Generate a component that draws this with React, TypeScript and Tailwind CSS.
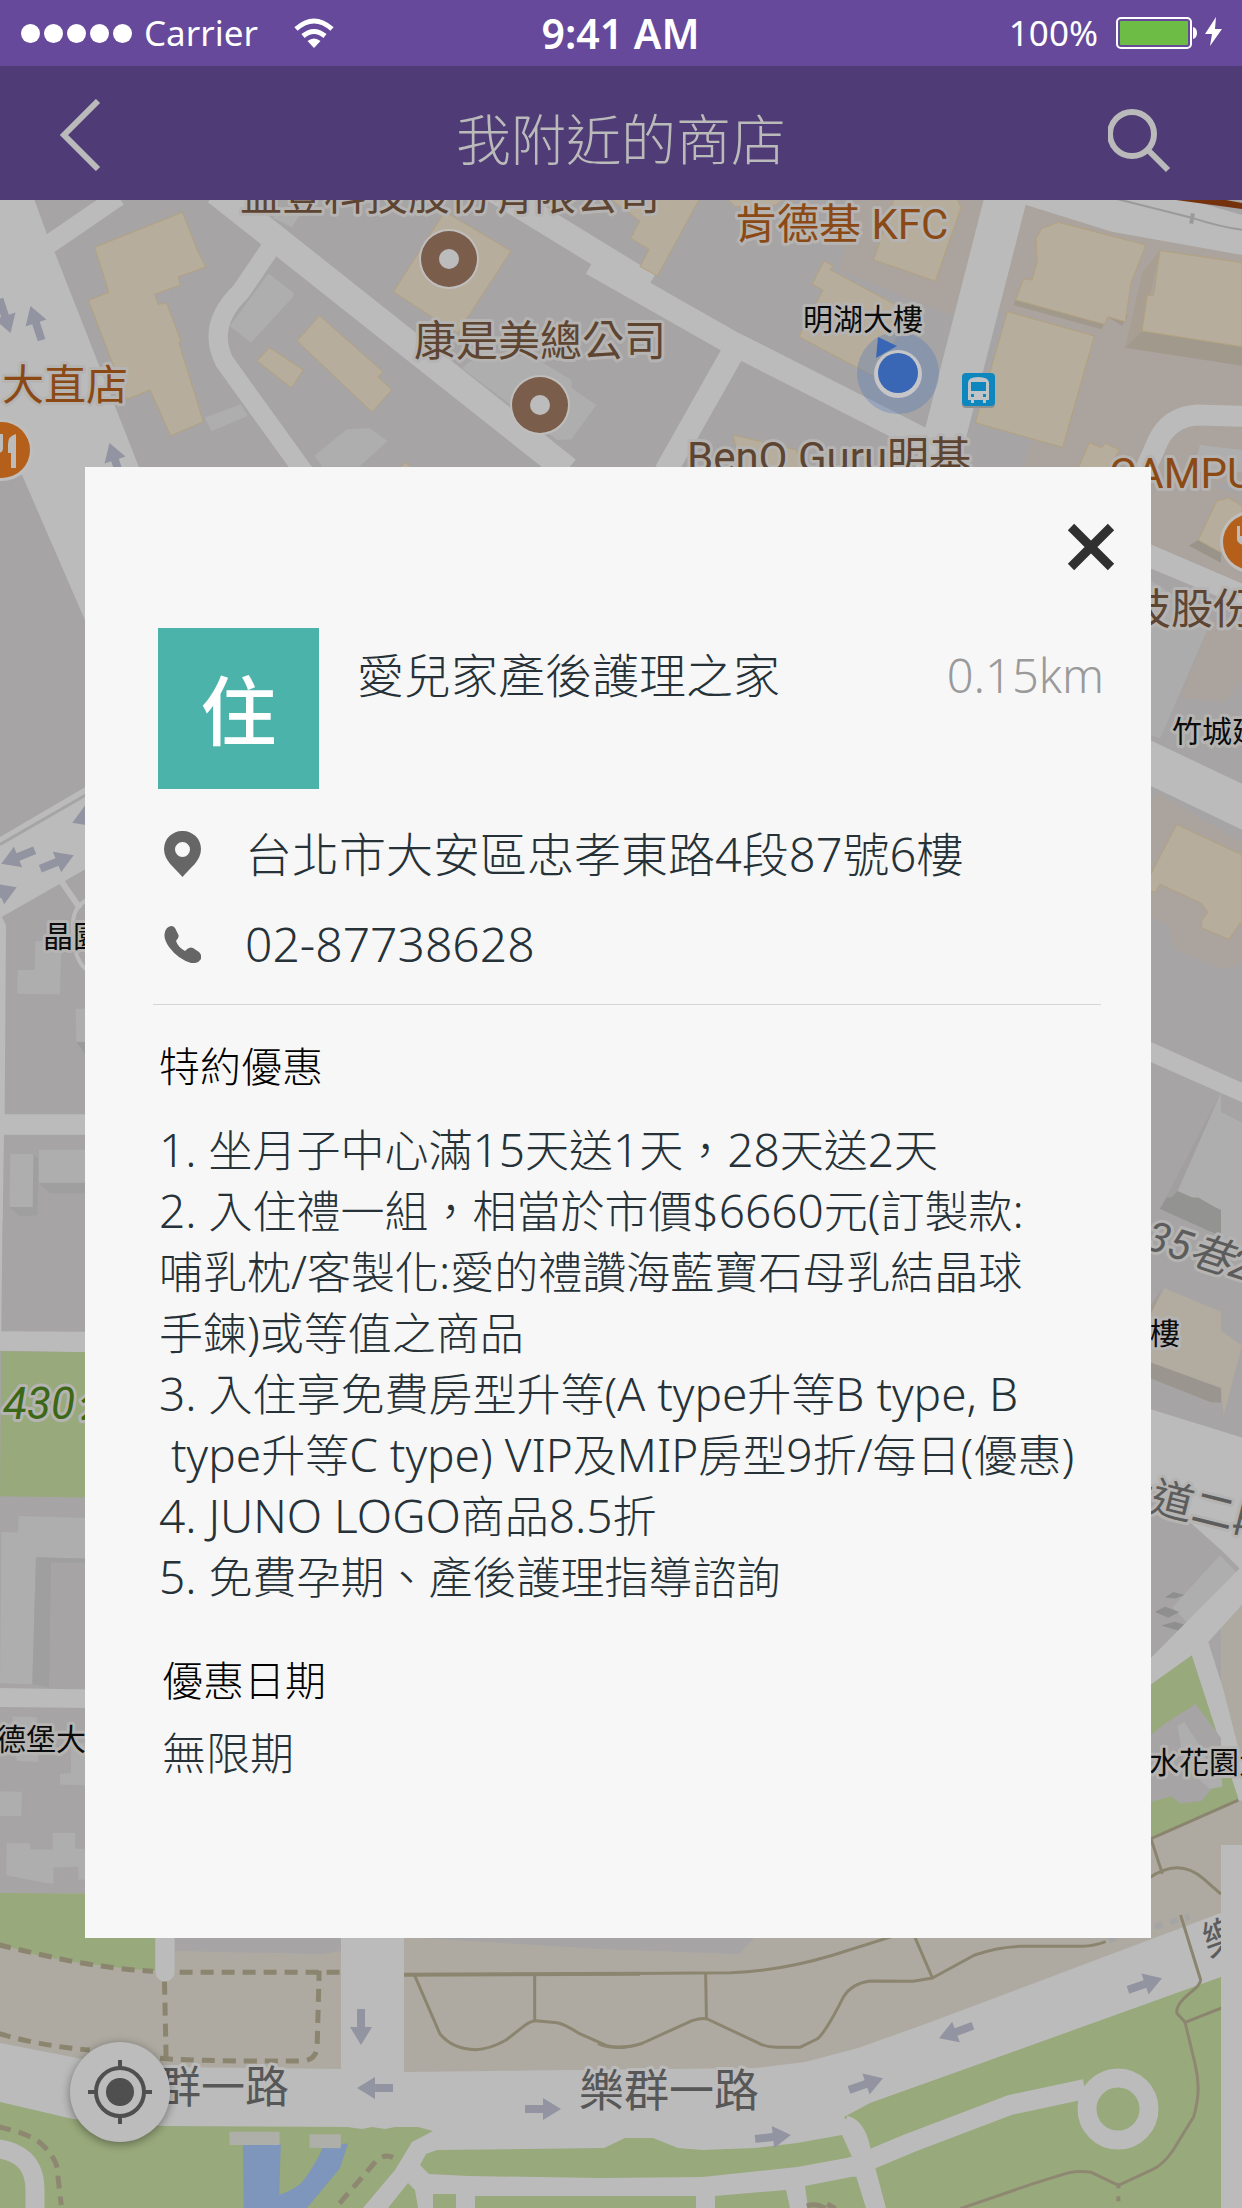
import React from "react";

const ROAD = "#bbbbbb";
const TAN = "#b6ad9c";
const TAN_EDGE = "#b3a27f";
const LIGHT = "#aeaeae";
const SHADE = "#9b9b9a";
const PINK = "#aba39d";
const GREEN = "#98a97b";
const BEIGE = "#aeaaa2";
const TRAIL = "#8b856f";

type Points = { p: string };

const Tan = ({ p }: Points) => (
  <polygon points={p} fill={TAN} stroke={TAN_EDGE} strokeWidth="1" vectorEffect="non-scaling-stroke" />
);
const Light = ({ p }: Points) => <polygon points={p} fill={LIGHT} />;
const Fill = ({ p, c }: Points & { c: string }) => <polygon points={p} fill={c} />;
const Way = ({ d, w, c = ROAD, dash, cap }: { d: string; w: number; c?: string; dash?: string; cap?: "round" | "butt" }) => (
  <path
    d={d}
    fill="none"
    stroke={c}
    strokeWidth={w}
    strokeDasharray={dash}
    strokeLinecap={cap}
    strokeLinejoin="round"
    vectorEffect="non-scaling-stroke"
  />
);
const Arrow = ({ x, y, a }: { x: number; y: number; a: number }) => (
  <path d="M-18,0 L0,-11 V-4 H18 V4 H0 V11 Z" fill="#9294a1" transform={`translate(${x} ${y}) rotate(${a})`} />
);
const Label = ({ x, y, s, c, a = 0, halo = "#b5b4b2", italic, children }: {
  x: number; y: number; s: number; c: string; a?: number; halo?: string; italic?: boolean; children: string;
}) => (
  <text
    transform={`translate(${x} ${y}) rotate(${a})`}
    fontSize={s}
    fill={c}
    stroke={halo}
    strokeWidth="6"
    strokeLinejoin="round"
    paintOrder="stroke"
    fontStyle={italic ? "italic" : undefined}
    className="font-['Roboto','Noto_Sans_CJK_TC',sans-serif] font-normal whitespace-pre"
  >
    {children}
  </text>
);
const Ring = ({ x, y }: { x: number; y: number }) => (
  <g>
    <circle cx={x} cy={y} r="30" fill="#c0bebc" />
    <circle cx={x} cy={y} r="28" fill="#7a5d4a" />
    <circle cx={x} cy={y} r="10" fill="#bcbcbc" />
  </g>
);
const Food = ({ x, y }: { x: number; y: number }) => (
  <g transform={`translate(${x} ${y})`}>
    <circle r="31" fill="#c0bebc" />
    <circle r="28" fill="#b5601a" />
    <path d="M-14,-16 h3 v10 h3 v-10 h3 v10 h3 v-10 h3 v14 q0,4 -4,5 v15 h-5 v-15 q-6,-2 -6,-6 Z" fill="#bcbcbc" />
    <path d="M14,-16 q-8,2 -8,10 v9 h3 v15 h5 Z" fill="#bcbcbc" />
  </g>
);

function CityMap() {
  return (
    <svg
      className="absolute inset-0 h-full w-full bg-[#a6a4a5]"
      viewBox="0 200 1242 2008"
      preserveAspectRatio="xMidYMin slice"
      role="img"
      aria-label="地圖"
    >
      {/* north-west blocks */}
      <g transform="translate(0 195) scale(.40816 .33333)">
        <Fill c={ROAD} p="0,0 80,0 115,118 135,175 340,815 500,1275 208,1275 54,840 0,825" />
        <Way d="M115,152 L290,5" w={19} />
        <Way d="M530,-10 L1390,825" w={27} />
        <Way d="M662,160 L590,290 Q505,390 550,500 L750,840" w={19} />
        <Way d="M1190,-30 L1590,270" w={25} />
        <Tan p="447,52 232,157 267,292 217,316 282,525 310,613 368,585 418,722 498,680 438,443 443,438 408,325 387,328 379,298 442,270 437,245 504,216 484,168" />
        <Tan p="783,362 728,438 911,650 960,585 926,546 938,530" />
        <Tan p="660,458 630,498 714,578 743,525" />
        <Tan p="1090,50 1252,168 1120,415 964,290" />
        <Tan p="993,802 970,830 1020,830" />
        <Light p="658,235 720,295 718,305 615,443 563,393" />
        <Light p="590,628 607,663 518,709 501,668" />
        <Light p="850,703 905,699 950,738 880,815 790,815 770,782" />
        <Light p="1150,500 1300,480 1400,555 1400,578 1461,630 1400,733 1365,735 1132,520" />
        <Light p="670,60 735,60 715,97 670,70" />
      </g>
      {/* north-east blocks */}
      <g transform="translate(600 195) scale(.40944 .33333)">
        <Fill c={PINK} p="620,0 950,0 860,362 585,225" />
        <Fill c={PINK} p="1040,20 1568,180 1568,870 1030,830 1100,560 965,320" />
        <Tan p="50,0 248,0 140,243 98,215 120,163 75,130 97,78 30,15" />
        <Tan p="300,0 460,0 430,30 330,35" />
        <Tan p="690,120 668,194 819,258 882,38 870,5 720,5" />
        <Tan p="547,198 570,212 562,224 760,355 670,545 486,425 545,285 518,268" />
        <Tan p="325,720 480,765 490,825 345,825" />
        <Fill c="#a1998c" p="1015,315 1010,330 1225,403 1240,365 1275,392 1290,360" />
        <Tan p="1120,82 1333,150 1297,263 1283,380 1240,365 1232,388 1015,315 1035,252 1055,255 1068,200 1065,130 1080,100" />
        <Fill c="#a89f92" p="1368,167 1325,230 1283,458 1324,408" />
        <Fill c="#a1998c" p="1324,408 1283,458 1568,512 1568,455" />
        <Tan p="1368,167 1568,203 1568,455 1324,408 1337,300 1352,302" />
        <Tan p="995,350 1207,423 1130,757 917,683" />
        <Tan p="1195,743 1225,758 1235,745 1268,765 1240,830 1165,830" />
        <Light p="1465,750 1568,765 1568,830 1450,830" />
        <Way d="M-20,205 L320,442 L790,735" w={24} />
        <Way d="M330,460 L160,830" w={23} />
        <Way d="M995,-10 L820,830" w={42} />
        <Way d="M1600,665 L1460,660 Q1390,665 1362,740 L1330,830" w={21} />
        <Fill c={ROAD} p="1035,0 1400,0 1568,60 1568,180 1250,110 1035,28" />
        <Way d="M1240,5 L1450,70 Q1520,98 1580,106" w={2} c="#9a9a9a" />
        <Way d="M1448,55 L1444,86" w={4} c="#9a9a9a" />
        <Fill c="#74330d" p="1395,13 1520,13 1568,24 1568,42" />
      </g>
      {/* west edge */}
      <g transform="translate(0 460) scale(.33333 .4847)">
        <Fill c={ROAD} p="0,778 260,673 260,843 0,945" />
        <Way d="M0,793 L260,690" w={3} c="#a6a5a6" />
        <Fill c={ROAD} p="0,935 18,960 14,1350 270,1350 270,1392 12,1392 8,1568 0,1568" />
        <Way d="M185,870 L240,925" w={6} />
        <Way d="M260,908 Q215,925 219,965 Q219,1030 260,1052" w={4} />
        <Light p="106,993 184,993 180,1103 51,1101 53,1052 104,1052" />
        <Fill c={SHADE} p="229,1200 260,1200 260,1230" />
        <Light p="227,1132 260,1132 260,1200 229,1200" />
        <Fill c="#9f9f9f" p="100,1432 114,1440 112,1558 60,1560 28,1541 98,1541" />
        <Light p="31,1432 100,1432 98,1541 28,1541" />
        <Fill c="#9f9f9f" p="117,1491 270,1491 270,1513 150,1513" />
        <Light p="117,1423 270,1423 270,1491 117,1491" />
      </g>
      <g transform="translate(0 1200) scale(.33333 .4847)">
        <Fill c={ROAD} p="0,0 8,0 4,271 270,272 270,314 0,311" />
        <Fill c={GREEN} p="4,312 270,314 270,614 0,611" />
        <Light p="56,652 270,656 270,740 108,737 97,999 0,997 4,685 54,686" />
        <Fill c="#9e9f9e" p="108,737 270,740 270,748 153,748 147,1005 97,999" />
        <Fill c={ROAD} p="0,1007 270,1010 270,1048 0,1046" />
        <Light p="37,1065 110,1067 115,1160 50,1157" />
        <Light p="180,1184 213,1182 213,1120 270,1120 270,1208 180,1206" />
        <Light p="0,1220 66,1221 64,1271 0,1271" />
        <Light p="20,1326 90,1327 90,1340 158,1340 158,1306 225,1306 225,1338 270,1340 270,1403 235,1402 235,1375 160,1377 161,1411 130,1408 18,1393" />
      </g>
      {/* east edge */}
      <g transform="translate(1145 460) scale(.33333 .4847)">
        <Fill c={PINK} p="10,20 291,70 291,255 18,175" />
        <Fill c={PINK} p="200,330 291,345 291,450 240,500 105,490" />
        <Fill c={ROAD} p="10,172 291,255 291,302 10,222" />
        <Fill c="#98948a" p="160,165 132,177 228,212 228,188" />
        <Tan p="215,85 250,78 291,95 291,130 230,192 160,165" />
        <Fill c="#adacad" p="10,245 200,330 45,575 10,565" />
        <Fill c={ROAD} p="10,576 291,668 291,763 10,670" />
        <Fill c={PINK} p="35,685 291,790 291,1040 230,1050 90,1010 70,960 10,940 10,720" />
        <Tan p="95,752 291,815 291,960 285,955 252,989 170,965 169,952 188,933 170,915 45,875 30,892 10,888 10,865" />
        <Fill c={ROAD} p="10,1198 291,1285 291,1325 10,1240" />
        <Fill c="#a19fa0" p="228,1305 98,1508 45,1545" />
        <Fill c="#939392" p="98,1508 45,1545 120,1568 228,1600 228,1547" />
        <Light p="228,1305 228,1345 291,1367 291,1568 228,1547 98,1508" />
      </g>
      <g transform="translate(1145 1200) scale(.33333 .4847)">
        <Fill c="#939392" p="65,-5 45,18 228,75 228,22 160,-5" />
        <Light p="228,0 291,0 291,100 228,80" />
        <Fill c="#9b958f" p="10,333 228,388 228,418 200,418 10,366" />
        <Fill c="#a49c92" p="52,182 10,225 10,250" />
        <Fill c="#b2ab9f" p="58,182 228,230 228,270 291,300 236,445 228,388 10,333 10,245" />
        <Fill c={ROAD} p="10,430 291,490 291,765 228,722 10,588" />
        <Fill c="#a6a4a5" p="10,640 60,645 228,725 228,860 140,912 10,950" />
        <Light p="225,733 291,780 235,870 145,885 82,840" />
        <Fill c="#8f8f8f" p="60,820 85,809 118,815 90,822" />
        <Fill c="#8f8f8f" p="30,850 60,839 103,850 70,862" />
        <Fill c="#8f8f8f" p="48,878 90,870 145,882 110,890" />
        <Fill c={BEIGE} p="291,815 228,870 228,1020 291,1180" />
        <Fill c={ROAD} p="10,950 291,755 291,835 190,912 235,1010 291,1160 291,1240 280,1240 140,940 10,1005" />
        <Fill c={GREEN} p="10,1003 140,940 280,1235 10,1320" />
        <Fill c="#a6a4a5" p="10,1108 60,1080 152,1040 228,1110 228,1190 170,1240 105,1245 80,1230 10,1243" />
        <Light p="97,1085 118,1077 150,1110 190,1160 230,1190 232,1210 195,1215 120,1170" />
        <Fill c={BEIGE} p="10,1320 280,1237 291,1240 291,1480 10,1560" />
      </g>
      {/* southern park and boulevard */}
      <rect x="0" y="1893" width="1242" height="315" fill={BEIGE} />
      <Fill c={GREEN} p="0,1893 155,1894 155,1971 122,1968 73,1962 37,1955 0,1944" />
      <Fill c="#a6a4a5" p="175,1930 341,1930 341,1951 322,1954 175,1951" />
      <Fill c="#a6a4a5" p="404,1937 755,1937 739,1954 600,1949" />
      <Fill c={ROAD} p="341,1900 404,1900 404,2072 756,2068 805,2062 858,2048 928,2023 1242,1905 1242,2208 0,2208 0,2043 82,2059 163,2067 341,2069" />
      <Way d="M165,1900 V1972" w={19} cap="round" />
      <Fill c={GREEN} p="0,2102 73,2119 163,2126 347,2127 362,2129 372,2127 385,2129 395,2127 418,2127 433,2131 412,2142 395,2170 363,2208 0,2208" />
      <Fill c={GREEN} p="437,2150 426,2154 420,2165 429,2174 469,2176 600,2178 702,2177 797,2167 852,2157 842,2135 797,2143 756,2148 702,2150 678,2148 653,2138 625,2138 604,2148" />
      <Fill c={GREEN} p="388,2208 408,2183 415,2190 418,2208" />
      <Fill c={GREEN} p="433,2194 456,2194 456,2208 433,2208" />
      <Fill c={GREEN} p="475,2196 696,2196 696,2208 475,2208" />
      <Fill c={GREEN} p="715,2196 786,2190 790,2208 715,2208" />
      <Fill c={GREEN} p="805,2186 856,2176 866,2208 808,2208" />
      <Fill c={GREEN} p="844,2117 870,2103 968,2068 1221,1977 1221,2208 880,2208 862,2140" />
      <Way d="M850,2168 L910,2143 L1010,2105 L1085,2089" w={20} />
      <circle cx="1118" cy="2109" r="31" fill="none" stroke={ROAD} strokeWidth="19" />
      <Way d="M845,2125 Q858,2128 862,2155 L878,2215" w={19} />
      <Way d="M-10,2148 Q35,2150 35,2190 V2215" w={19} />
      <g transform="translate(0 1920) scale(.40816 .33333)">
        <path d="M595,672 H688 L684,825 Q720,810 740,787 Q775,730 790,684 L853,670 L833,745 L752,864 H597 Z" fill="#7e96bb" />
        <Fill c="#afafa9" p="562,635 685,635 685,675 562,675" />
        <Fill c="#afafa9" p="758,643 835,643 835,685 758,683" />
        <g>
          <Way d="M-5,74 Q90,102 180,125 Q280,147 375,154" w={5} c={TRAIL} dash="13 8" />
          <Way d="M440,157 H835" w={5} c={TRAIL} dash="13 8" />
          <Way d="M403,185 L407,415" w={5} c={TRAIL} dash="13 8" />
          <Way d="M-5,340 Q100,378 220,390" w={5} c={TRAIL} dash="13 8" />
          <Way d="M392,415 Q500,425 740,423 Q775,420 777,380 L782,152" w={5} c={TRAIL} dash="13 8" />
          <Way d="M-5,620 Q70,640 100,670 Q145,720 142,770 L150,855" w={5} c="#8e8872" dash="13 8" />
          <Way d="M832,850 L920,725 Q940,700 963,712" w={5} c="#8e8872" dash="13 8" />
          <Way d="M990,164 L1568,161" w={4} c={TRAIL} />
          <Way d="M1015,164 L1078,342 Q1110,388 1165,389 Q1200,388 1240,360 L1285,317 Q1300,303 1312,302 L1365,308 Q1385,313 1420,341 L1485,376 Q1520,388 1575,370" w={3} c={TRAIL} />
          <Way d="M1310,161 V302" w={3} c={TRAIL} />
        </g>
      </g>
      <g transform="translate(600 1920) scale(.40944 .33333)">
        <Way d="M-10,161 L320,158 Q440,153 570,105 L720,47" w={3} c={TRAIL} />
        <Way d="M258,161 L260,295" w={3} c={TRAIL} />
        <Way d="M-5,370 Q20,385 60,382 Q85,380 110,366 L225,302 Q250,292 262,297 L385,368 Q405,382 430,382 H488 L530,357 Q550,340 595,230 Q615,190 660,183 L765,184 L812,174 L915,105 Q975,80 1030,79 H1180 Q1205,78 1235,65" w={3} c={TRAIL} />
        <Way d="M765,40 L812,174" w={3} c={TRAIL} />
        <Way d="M1242,60 L1440,-10" w={6} c="#a5a5a5" dash="8 8" />
        <Way d="M1418,-15 L1467,180 Q1467,195 1440,220 Q1405,255 1409,280 L1429,307 L1520,263" w={3} c={TRAIL} />
        <Way d="M1429,307 L1453,430 Q1470,510 1450,590 L1400,690 Q1375,735 1350,748 L1266,796 L1200,757 Q1170,752 1145,758 L1060,790 L880,866" w={3} c="#8e8872" />
        <Way d="M1266,790 V864" w={4} c="#8e8872" dash="5 8" />
        <Way d="M505,858 Q530,848 550,866 M555,852 L575,866" w={5} c="#8e8872" />
      </g>
      <g transform="translate(1145 1200) scale(.33333 .4847)">
        <Way d="M10,1320 L280,1238" w={3} c={TRAIL} />
        <Way d="M18,1318 L52,1390" w={3} c={TRAIL} />
        <Way d="M10,1400 Q100,1355 175,1400 L228,1432" w={3} c={TRAIL} />
      </g>
      <rect x="1221" y="1845" width="21" height="363" fill={ROAD} />

      <Arrow x={5} y={316} a={-108} />
      <Arrow x={36} y={323} a={72} />
      <Arrow x={115} y={460} a={72} />
      <Arrow x={18} y={857} a={-22} />
      <Arrow x={57} y={862} a={158} />
      <Arrow x={0} y={894} a={158} />
      <Arrow x={89} y={816} a={-22} />
      <Arrow x={361} y={2027} a={-90} />
      <Arrow x={375} y={2088} a={0} />
      <Arrow x={543} y={2109} a={180} />
      <Arrow x={773} y={2137} a={174} />
      <Arrow x={866} y={2084} a={161} />
      <Arrow x={956} y={2032} a={-20} />
      <Arrow x={1145} y={1984} a={161} />

      <Label x={240} y={210} s={42} c="#5e4532">益登科技股份有限公司</Label>
      <Label x={414} y={356} s={42} c="#5e4532">康是美總公司</Label>
      <Label x={735} y={239} s={42} c="#8b4a15">肯德基 KFC</Label>
      <Label x={2} y={400} s={42} c="#8b4a15">大直店</Label>
      <Label x={687} y={472} s={42} c="#5e4532">BenQ Guru明基</Label>
      <Label x={1109} y={488} s={42} c="#8b4a15">CAMPUS</Label>
      <Label x={1129} y={624} s={42} c="#5e4532">技股份</Label>
      <Label x={1172} y={742} s={30} c="#0c0c0c">竹城建</Label>
      <Label x={43} y={947} s={30} c="#0c0c0c">晶園</Label>
      <Label x={3} y={1419} s={44} c="#3c6715" italic>430公</Label>
      <Label x={-4} y={1750} s={30} c="#0c0c0c">德堡大</Label>
      <Label x={1150} y={1344} s={30} c="#0c0c0c">樓</Label>
      <Label x={1149} y={1773} s={30} c="#0c0c0c">水花園大</Label>
      <Label x={1143} y={1248} s={42} c="#5c5c5c" a={18} italic>35巷2</Label>
      <Label x={1108} y={1500} s={42} c="#5c5c5c" a={14}>大道二段</Label>
      <Label x={1209} y={1958} s={42} c="#5c5c5c" a={-20} halo={ROAD}>樂</Label>
      <Label x={113} y={2103} s={44} c="#575757" halo={ROAD}>樂群一路</Label>
      <Label x={579} y={2107} s={45} c="#575757" halo={ROAD}>樂群一路</Label>
      <rect x="1221" y="1900" width="21" height="90" fill={ROAD} />

      <Ring x={449} y={259} />
      <Ring x={540} y={405} />
      <Food x={2} y={450} />
      <Food x={1251} y={542} />

      <circle cx="898" cy="373" r="41" fill="#4d77b8" fillOpacity="0.32" />
      <path d="M878,337 L897,346 L876,358 Z" fill="#3a67b5" />
      <circle cx="898" cy="374" r="24" fill="#c6c6c8" />
      <circle cx="898" cy="373" r="20" fill="#3a67b5" />
      <Label x={803} y={330} s={30} c="#0c0c0c">明湖大樓</Label>

      <rect x="962" y="375" width="33" height="33" rx="4" fill="#8f8f8f" />
      <rect x="962" y="373" width="33" height="33" rx="4" fill="#0e87be" />
      <path d="M968,400 V383 Q968,377 978,377 Q989,377 989,383 V400 H986 V403 H983 V400 H974 V403 H971 V400 Z" fill="#c0c4c6" />
      <path d="M971,382 h15 v9 h-15 Z M971,394 h3 v3 h-3 Z M983,394 h3 v3 h-3 Z" fill="#0e87be" />
    </svg>
  );
}

function StatusBar() {
  return (
    <div className="grid h-[66px] shrink-0 grid-cols-3 items-center bg-[#66499b] pl-[21px] pr-[18px] font-['Noto_Sans',sans-serif] text-[35px] font-normal leading-[66px] text-white">
      <div className="flex items-center">
        <div className="flex gap-1">
          {[0, 1, 2, 3, 4].map((i) => (
            <span key={i} className="h-[19px] w-[19px] rounded-full bg-white" />
          ))}
        </div>
        <span className="ml-3">Carrier</span>
        <svg className="ml-9 h-[30px] w-10" viewBox="0 0 40 30" fill="none" stroke="#fff" strokeWidth="5" aria-label="Wi-Fi">
          <path d="M2,11 Q20,-5 38,11" />
          <path d="M9,18 Q20,9 31,18" />
          <path d="M20,30 L13.500,23 Q20,18 26.500,23 Z" fill="#fff" stroke="none" />
        </svg>
      </div>
      <span className="pr-1 text-center text-[41px] font-semibold">9:41 AM</span>
      <div className="flex items-center justify-end">
        <span>100%</span>
        <svg className="ml-[18px] h-8 w-[108px]" viewBox="0 0 108 32" aria-label="電池">
          <rect x="1" y="1" width="74" height="30" rx="4" fill="none" stroke="#fff" strokeWidth="2" />
          <rect x="4" y="4" width="68" height="24" rx="1" fill="#6cbc45" />
          <path d="M77,10 Q81,11 81,16 Q81,21 77,22 Z" fill="#fff" />
          <path d="M100,0 L89,17 H96 L94,29 L106,12 H99 Z" fill="#fff" />
        </svg>
      </div>
    </div>
  );
}

/* Gives Latin runs their own weight and size beside the light Chinese text. */
function Mixed({ latin, children }: { latin: string; children: string }) {
  return (
    <>
      {children.split(/([\x20-\x7e]+)/).map((run, i) =>
        i % 2 ? <span key={i} className={latin}>{run}</span> : run,
      )}
    </>
  );
}

const offers: string[][] = [
  ["1. 坐月子中心滿15天送1天，28天送2天"],
  ["2. 入住禮一組，相當於市價$6660元(訂製款:", "哺乳枕/客製化:愛的禮讚海藍寶石母乳結晶球", "手鍊)或等值之商品"],
  ["3. 入住享免費房型升等(A type升等B type, B", " type升等C type) VIP及MIP房型9折/每日(優惠)"],
  ["4. JUNO LOGO商品8.5折"],
  ["5. 免費孕期、產後護理指導諮詢"],
];

export default function App() {
  return (
    <div lang="zh-Hant" className="flex min-h-screen flex-col overflow-x-hidden font-['Noto_Sans','Noto_Sans_CJK_TC',sans-serif] font-light">
      <StatusBar />
      <header className="grid h-[134px] shrink-0 grid-cols-[1fr_auto_1fr] items-center bg-[#4f3b76] pl-[58px] pr-[70px]">
        <button type="button" aria-label="返回" className="justify-self-start pt-1">
          <svg className="h-[72px] w-11" viewBox="0 0 44 72" fill="none" stroke="#bababa" strokeWidth="6">
            <path d="M40,2 L6,36 L40,70" />
          </svg>
        </button>
        <h1 className="pl-3 pt-3 text-[55px] leading-[80px] text-[#bababa]">我附近的商店</h1>
        <button type="button" aria-label="搜尋" className="justify-self-end">
          <svg className="mt-4 h-16 w-16" viewBox="0 0 64 64" fill="none" stroke="#bababa" strokeWidth="6">
            <circle cx="24" cy="25" r="22" />
            <path d="M40,41 L60,61" />
          </svg>
        </button>
      </header>

      <main className="relative flex-1 overflow-hidden pb-[270px] pl-[85px] pr-[91px] pt-[267px]">
        <CityMap />
        <button
          type="button"
          aria-label="定位"
          className="absolute bottom-[66px] left-[70px] flex h-[100px] w-[100px] items-center justify-center rounded-full bg-[#bcbcbc] shadow-[0_2px_10px_rgba(0,0,0,0.4)]"
        >
          <svg className="h-16 w-16" viewBox="0 0 64 64" fill="none" stroke="#4f4f4f" strokeWidth="4">
            <circle cx="32" cy="32" r="24" />
            <circle cx="32" cy="32" r="14" fill="#4f4f4f" stroke="none" />
            <path d="M32,0 V8 M32,56 V64 M0,32 H8 M56,32 H64" />
          </svg>
        </button>

        <section role="dialog" aria-label="愛兒家產後護理之家" className="relative bg-[#f7f7f7] pb-[155px] pt-14 text-[#263238]">
          <div className="flex justify-end pr-9">
            <button type="button" aria-label="關閉">
              <svg className="h-12 w-12" viewBox="0 0 48 48" fill="none" stroke="#303030" strokeWidth="9">
                <path d="M4,4 L44,44 M44,4 L4,44" />
              </svg>
            </button>
          </div>

          <div className="mt-[57px] flex items-start pl-[73px] pr-[47px]">
            <div className="flex h-[161px] w-[161px] shrink-0 items-center justify-center bg-[#4cb3ab] pt-1 text-[76px] font-medium leading-none text-white">住</div>
            <h2 className="ml-[38px] flex-1 whitespace-nowrap pt-[13px] text-[47px] leading-[68px]">愛兒家產後護理之家</h2>
            <span className="pt-[13px] text-[47px] font-[350] leading-[68px] text-[#9a9a9a]">0.15km</span>
          </div>

          <div className="mt-5 pl-[79px] pr-12 text-[47px] leading-[90px]">
            <div className="flex items-center">
              <svg className="h-[46px] w-[37px]" viewBox="0 0 37 46" fill="#666666" aria-hidden="true">
                <path fillRule="evenodd" d="M18.500,0 A18,18 0 0 1 37,18 C37,30 26,37 18.500,46 C11,37 0,30 0,18 A18,18 0 0 1 18.500,0 Z M18.500,11 A7.500,7.500 0 1 0 18.500,26 A7.500,7.500 0 1 0 18.500,11 Z" />
              </svg>
              <span className="ml-11 whitespace-nowrap"><Mixed latin="font-[350]">台北市大安區忠孝東路4段87號6樓</Mixed></span>
            </div>
            <div className="flex items-center">
              <svg className="h-[37px] w-[37px]" viewBox="0 0 37 37" fill="#666666" aria-hidden="true">
                <path d="M3,2 Q8,-2 11,2 L14,8 Q16,11 12,15 Q14,21 21,25 Q25,20 29,22 L35,26 Q38,29 37,33 Q34,38 27,37 Q14,33 5,21 Q-3,9 3,2 Z" />
              </svg>
              <span className="ml-11 text-[48px] font-[350]">02-87738628</span>
            </div>
          </div>

          <hr className="ml-[68px] mr-[50px] mt-[15px] border-t border-[#d6d6d6]" />

          <div className="mt-[31px] pl-[74px]">
            <h3 className="text-[41px] leading-[60px] text-black">特約優惠</h3>
            <ol className="mt-[23px] list-none text-[44px] leading-[61px]">
              {offers.map((lines) => (
                <li key={lines[0]}>
                  {lines.map((line) => (
                    <span key={line} className="block h-[61px] whitespace-pre"><Mixed latin="text-[46px] font-[350]">{line}</Mixed></span>
                  ))}
                </li>
              ))}
            </ol>
          </div>
          <div className="mt-[43px] pl-[77px]">
            <h3 className="text-[41px] leading-[60px] text-black">優惠日期</h3>
            <p className="mt-[13px] text-[44px] leading-[60px]">無限期</p>
          </div>
        </section>
      </main>
    </div>
  );
}
